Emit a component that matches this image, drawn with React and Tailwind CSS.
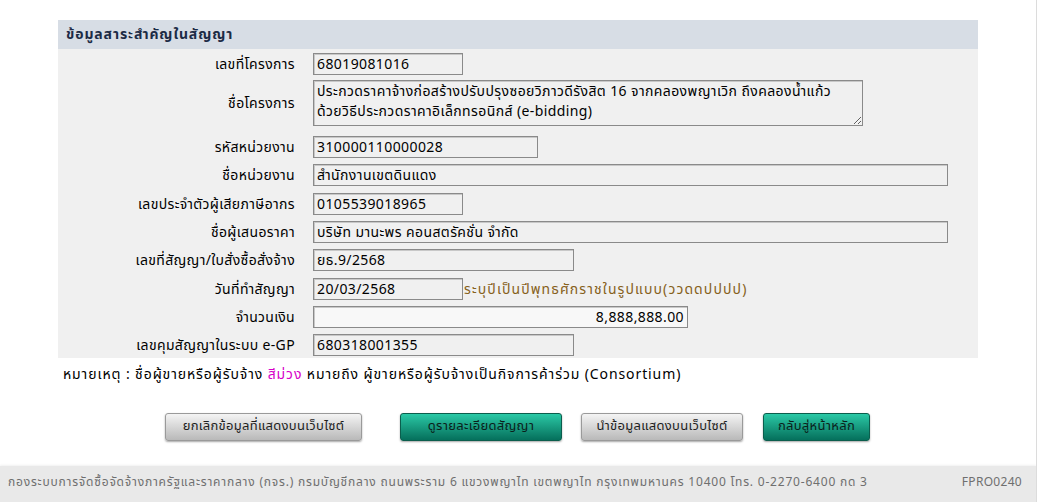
import React from 'react';

const font = { fontFamily: 'Tahoma, "Noto Sans Thai", "Noto Sans", "DejaVu Sans", sans-serif' };

function Field({ value, w, align = 'left', light = false }) {
  return (
    <div
      className={`h-[22px] border border-[#8a8a8a] shadow-[inset_1px_1px_0_#c8c8c8] px-[3px] flex items-center text-[14px] tracking-[0.4px] text-black whitespace-nowrap overflow-hidden ${light ? 'bg-[#f8f8f8]' : 'bg-[#f0f0f0]'} ${align === 'right' ? 'justify-end' : ''}`}
      style={{ width: w }}
    >
      {value}
    </div>
  );
}

function Row({ label, children, top = 'mt-[6px]' }) {
  return (
    <div className={`flex items-center ${top}`}>
      <div className="w-[237px] text-right text-[14px] tracking-[0.35px] text-black">{label}</div>
      <div className="ml-[18px] flex items-center">{children}</div>
    </div>
  );
}

function Btn({ children, teal, w }) {
  return (
    <button
      className={`h-[28px] rounded-[3px] text-[13px] tracking-[0.3px] flex items-center justify-center shadow-[0_1px_2px_rgba(0,0,0,0.35)] ${
        teal
          ? 'bg-gradient-to-b from-[#2ac9a6] to-[#05705c] border border-[#0b5e4d] text-[#0a1f1b]'
          : 'bg-gradient-to-b from-[#f4f4f4] to-[#b9b9b9] border border-[#9a9a9a] text-[#1e1e1e]'
      }`}
      style={{ width: w }}
    >
      {children}
    </button>
  );
}

export default function App() {
  return (
    <div className="w-[1037px] h-[502px] bg-white relative overflow-hidden flex flex-col border-r border-[#dcdcdc]" style={font}>
      <div className="pt-[20px] pl-[58px]">
        <div className="w-[920px]">
          <div className="h-[29px] bg-[#d7dde5] flex items-center pl-[8px] text-[14px] tracking-[0.9px] font-bold text-[#1c2b45]">
            ข้อมูลสาระสำคัญในสัญญา
          </div>
          <div className="bg-[#f0f0f0] pt-[4px] pb-[2px]">
            <Row label="เลขที่โครงการ" top="mt-0">
              <Field value="68019081016" w={150} />
            </Row>
            <Row label="ชื่อโครงการ" top="mt-[5px]">
              <textarea
                readOnly
                className="w-[550px] h-[46px] border border-[#8a8a8a] shadow-[inset_1px_1px_0_#c8c8c8] bg-[#f0f0f0] text-[14px] tracking-[0.4px] leading-[20px] px-[3px] py-[1px] outline-none text-black overflow-hidden"
                value={'ประกวดราคาจ้างก่อสร้างปรับปรุงซอยวิภาวดีรังสิต 16 จากคลองพญาเวิก ถึงคลองน้ำแก้ว\nด้วยวิธีประกวดราคาอิเล็กทรอนิกส์ (e-bidding)'}
                style={font}
              />
            </Row>
            <Row label="รหัสหน่วยงาน" top="mt-[10px]">
              <Field value="310000110000028" w={225} />
            </Row>
            <Row label="ชื่อหน่วยงาน">
              <Field value="สำนักงานเขตดินแดง" w={635} />
            </Row>
            <Row label="เลขประจำตัวผู้เสียภาษีอากร" top="mt-[7px]">
              <Field value="0105539018965" w={150} />
            </Row>
            <Row label="ชื่อผู้เสนอราคา">
              <Field value="บริษัท มานะพร คอนสตรัคชั่น จำกัด" w={635} />
            </Row>
            <Row label="เลขที่สัญญา/ใบสั่งซื้อสั่งจ้าง">
              <Field value="ยธ.9/2568" w={261} />
            </Row>
            <Row label="วันที่ทำสัญญา" top="mt-[7px]">
              <Field value="20/03/2568" w={150} />
              <span className="ml-[1px] text-[14px] tracking-[1.1px] text-[#86601a]">ระบุปีเป็นปีพุทธศักราชในรูปแบบ(ววดดปปปป)</span>
            </Row>
            <Row label="จำนวนเงิน">
              <Field value="8,888,888.00" w={375} align="right" light />
            </Row>
            <Row label="เลขคุมสัญญาในระบบ e-GP">
              <Field value="680318001355" w={261} />
            </Row>
          </div>
          <div className="mt-[6px] pl-[5px] text-[14px] tracking-[0.9px] text-black">
            หมายเหตุ : ชื่อผู้ขายหรือผู้รับจ้าง <span className="text-[#d600c8]">สีม่วง</span> หมายถึง ผู้ขายหรือผู้รับจ้างเป็นกิจการค้าร่วม (Consortium)
          </div>
        </div>
      </div>
      <div className="mt-[28px] flex pl-[165px]">
        <Btn w={197}>ยกเลิกข้อมูลที่แสดงบนเว็บไซต์</Btn>
        <div className="ml-[38px]"><Btn teal w={162}>ดูรายละเอียดสัญญา</Btn></div>
        <div className="ml-[19px]"><Btn w={162}>นำข้อมูลแสดงบนเว็บไซต์</Btn></div>
        <div className="ml-[20px]"><Btn teal w={107}>กลับสู่หน้าหลัก</Btn></div>
      </div>
      <div className="mt-auto h-[36px] bg-[#e9e9e9] shadow-[0_-1px_2px_rgba(0,0,0,0.06)] flex items-start pt-[7px] px-[8px] text-[12px] tracking-[0.8px] text-[#6f6f6f]">
        <span>กองระบบการจัดซื้อจัดจ้างภาครัฐและราคากลาง (กจร.) กรมบัญชีกลาง ถนนพระราม 6 แขวงพญาไท เขตพญาไท กรุงเทพมหานคร 10400 โทร. 0-2270-6400 กด 3</span>
        <span className="ml-auto pr-[6px] tracking-[0.3px]">FPRO0240</span>
      </div>
    </div>
  );
}
